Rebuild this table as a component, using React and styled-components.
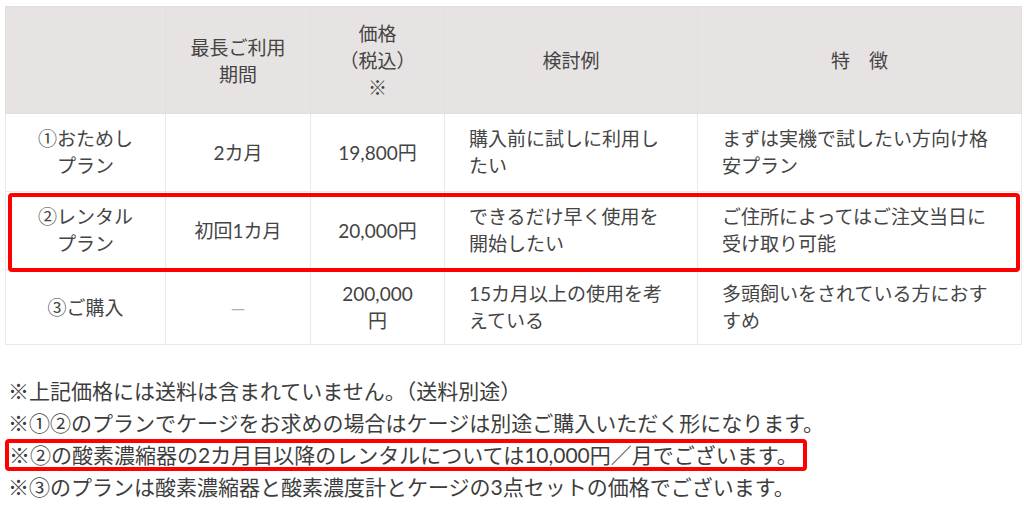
import React from 'react'
import styled, { createGlobalStyle } from 'styled-components'

const GlobalStyle = createGlobalStyle`
	body {
		margin: 0;
		background: #fff;
		font-family: Lato, "Noto Sans CJK JP", sans-serif;
		color: #444;
	}
`

const Page = styled.div`
	padding: 6px 0 0 5px;
	width: 1016px;
`

const TableWrap = styled.div`
	position: relative;
`

const PriceTable = styled.table`
	width: 1016px;
	table-layout: fixed;
	border-collapse: collapse;
	font-size: 19px;
	line-height: 27px;
`

const HeadCell = styled.th`
	background: #e7e3e2;
	font-weight: normal;
	text-align: center;
	vertical-align: middle;
	padding: 13px 12px 12px;
	border: 1px solid #e2dedd;
`

const Cell = styled.td`
	text-align: ${props => (props.left ? 'left' : 'center')};
	vertical-align: middle;
	padding: ${props => (props.last ? '10px 24px 10px' : '11px 24px 12px')};
	border: 1px solid #ebe8e8;
`

// circled digits: the CJK glyph is narrow, so give it a full-width box
const Circled = styled.span`
	display: inline-block;
	width: 1em;
	line-height: 1;
	text-align: center;
	font-family: "Noto Sans CJK JP", sans-serif;
`

const Dash = styled.span`
	color: #b0b0b0;
`

const Highlight = styled.div`
	position: absolute;
	left: 3px;
	top: 187px;
	width: 1012px;
	height: 79px;
	box-sizing: border-box;
	border: 4px solid #f00;
	border-radius: 4px;
	pointer-events: none;
`

const Notes = styled.div`
	margin-top: 30px;
	margin-left: 3px;
	font-size: 21px;
	line-height: 32px;
	color: #3d3d3d;
`

const Note = styled.div`
	white-space: nowrap;
`

const Marked = styled.span`
	display: inline-block;
	border: 4px solid #f00;
	border-radius: 4px;
	margin: 0 0 -4px -3px;
	padding: 0 5px 0 0;
	line-height: 24px;
`

const columns = [160, 145, 134, 253, 324]

const rows = [
	{ num: '①', plan: ['おためし', 'プラン'], term: '2カ月', price: '19,800円', example: '購入前に試しに利用したい', feature: 'まずは実機で試したい方向け格安プラン' },
	{ num: '②', plan: ['レンタル', 'プラン'], term: '初回1カ月', price: '20,000円', example: 'できるだけ早く使用を開始したい', feature: 'ご住所によってはご注文当日に受け取り可能' },
	{ num: '③', plan: ['ご購入'], term: null, price: '200,000円', example: '15カ月以上の使用を考えている', feature: '多頭飼いをされている方におすすめ' },
]

const App = () => (
	<Page>
		<GlobalStyle />
		<TableWrap>
			<PriceTable>
				<colgroup>
					{columns.map((w, i) => <col key={i} style={{ width: w }} />)}
				</colgroup>
				<thead>
					<tr>
						<HeadCell></HeadCell>
						<HeadCell>最長ご利用<br />期間</HeadCell>
						<HeadCell>価格<br />（税込）<br />※</HeadCell>
						<HeadCell>検討例</HeadCell>
						<HeadCell>特　徴</HeadCell>
					</tr>
				</thead>
				<tbody>
					{rows.map((row, i) => {
						const last = i === rows.length - 1
						return (
							<tr key={i}>
								<Cell last={last}>
									<Circled>{row.num}</Circled>
									{row.plan.map((line, j) => (
										<React.Fragment key={j}>{j > 0 && <br />}{line}</React.Fragment>
									))}
								</Cell>
								<Cell last={last}>{row.term ? row.term : <Dash>―</Dash>}</Cell>
								<Cell last={last}>{row.price}</Cell>
								<Cell last={last} left>{row.example}</Cell>
								<Cell last={last} left>{row.feature}</Cell>
							</tr>
						)
					})}
				</tbody>
			</PriceTable>
			<Highlight />
		</TableWrap>
		<Notes>
			<Note>※上記価格には送料は含まれていません。（送料別途）</Note>
			<Note>※<Circled>①</Circled><Circled>②</Circled>のプランでケージをお求めの場合はケージは別途ご購入いただく形になります。</Note>
			<Note><Marked>※<Circled>②</Circled>の酸素濃縮器の2カ月目以降のレンタルについては10,000円／月でございます。</Marked></Note>
			<Note>※<Circled>③</Circled>のプランは酸素濃縮器と酸素濃度計とケージの3点セットの価格でございます。</Note>
		</Notes>
	</Page>
)

export default App
